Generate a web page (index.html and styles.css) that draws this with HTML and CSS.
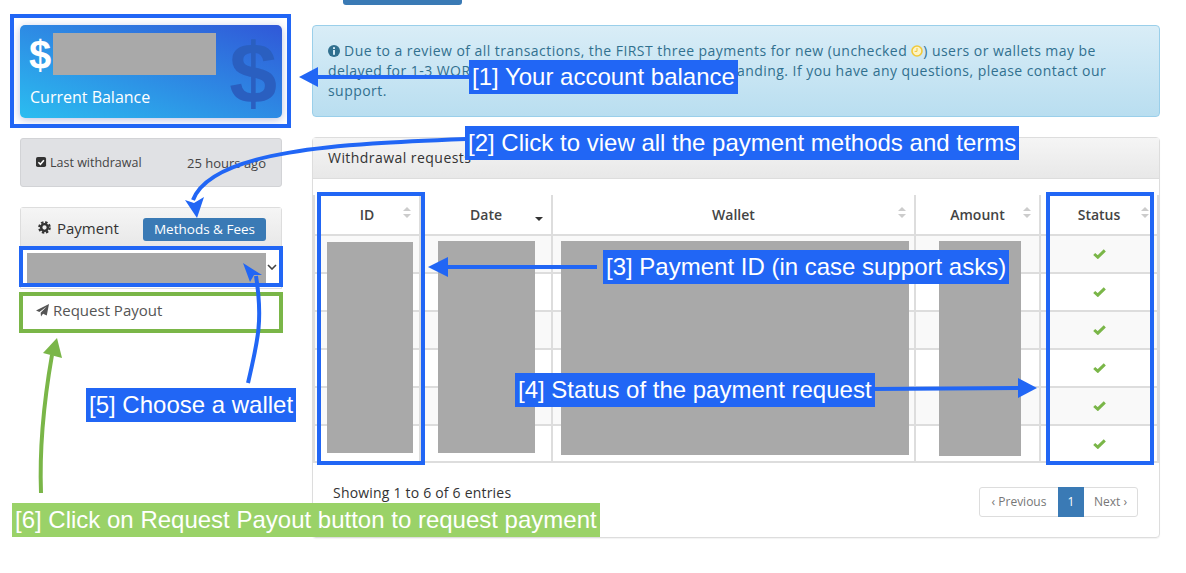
FILE: index.html
```html
<!DOCTYPE html>
<html lang="en">
<head>
<meta charset="UTF-8" />
<meta name="viewport" content="width=device-width, initial-scale=1.0"/>
<title>Withdrawals</title>
<link rel="stylesheet" href="styles.css">
</head>
<body>
<div class="page">

  <!-- Left column -->
  <aside class="sidebar">
    <div class="balance-card">
      <div class="balance-amount">$</div>
      <div class="balance-label">Current Balance</div>
      <div class="balance-bg">$</div>
    </div>

    <div class="last-box">
      <span class="last-title">
        <svg class="icon-check-square" viewBox="0 0 12 12"><rect width="11" height="11" rx="2" fill="#333"/><path d="M2.6 5.8 L4.8 8 L8.6 3.6" fill="none" stroke="#fff" stroke-width="1.7"/></svg>
        Last withdrawal
      </span>
      <span class="last-time">25 hours ago</span>
    </div>

    <div class="pay-panel">
      <div class="pay-head">
        <span class="pay-title">
          <svg class="icon-gear" viewBox="0 0 14 14"><circle cx="7" cy="7" r="3.6" fill="none" stroke="#333" stroke-width="2.6"/><circle cx="7" cy="7" r="5.6" fill="none" stroke="#333" stroke-width="2.4" stroke-dasharray="2.6 1.8"/></svg>
          Payment
        </span>
        <a class="btn-fees">Methods &amp; Fees</a>
      </div>
      <div class="pay-select">
        <svg class="icon-chevron" viewBox="0 0 10 6"><path d="M1 1 L5 5 L9 1" fill="none" stroke="#444" stroke-width="1.6"/></svg>
      </div>
    </div>

    <button class="btn-payout">
      <svg class="icon-plane" viewBox="0 0 14 14"><path d="M14 0 L11.6 12.4 L7.6 10.6 L5.4 13.4 L5 9.4 L11.6 2.8 L3.6 8.6 L0 7 Z" fill="#555"/></svg>
      Request Payout
    </button>
  </aside>

  <!-- Right column -->
  <main class="content">
    <div class="top-stub"></div>

    <div class="alert">
      <svg class="icon-info" viewBox="0 0 12 12"><circle cx="6" cy="6" r="6" fill="#31708f"/><rect x="5" y="2.2" width="2" height="1.8" fill="#d4e9f5"/><rect x="5" y="5" width="2" height="4.8" fill="#d4e9f5"/></svg>
      Due to a review of all transactions, the <span class="strong">FIRST three payments</span> for new (unchecked
      <svg class="icon-clock" viewBox="0 0 12 12"><circle cx="6" cy="6" r="5" fill="#fdf3c4" stroke="#f0c93a" stroke-width="1.6"/><path d="M6 3 V6.4 H3.6" fill="none" stroke="#f0c93a" stroke-width="1"/></svg>) users or wallets may be<br>
      delayed for <span class="strong">1-3 WORKING DAYS</span> while the reviews are outstanding. If you have any questions, please contact our<br>
      support.
    </div>

    <section class="panel">
      <div class="panel-head">Withdrawal requests</div>
      <table class="requests">
        <thead>
          <tr>
            <th class="col-id"><div class="th-in"><i></i><span>ID</span><b class="sort"></b></div></th>
            <th class="col-date"><div class="th-in"><i></i><span>Date</span><b class="sort-down"></b></div></th>
            <th class="col-wallet"><div class="th-in"><i></i><span>Wallet</span><b class="sort"></b></div></th>
            <th class="col-amount"><div class="th-in"><i></i><span>Amount</span><b class="sort"></b></div></th>
            <th class="col-status"><div class="th-in"><i></i><span>Status</span><b class="sort"></b></div></th>
          </tr>
        </thead>
        <tbody>
          <tr><td></td><td></td><td></td><td></td><td><svg class="icon-ok" viewBox="0 0 13 10"><path d="M1.2 5 L4.8 8.2 L11.8 1.4" fill="none" stroke="#7ab648" stroke-width="3"/></svg></td></tr>
          <tr><td></td><td></td><td></td><td></td><td><svg class="icon-ok" viewBox="0 0 13 10"><path d="M1.2 5 L4.8 8.2 L11.8 1.4" fill="none" stroke="#7ab648" stroke-width="3"/></svg></td></tr>
          <tr><td></td><td></td><td></td><td></td><td><svg class="icon-ok" viewBox="0 0 13 10"><path d="M1.2 5 L4.8 8.2 L11.8 1.4" fill="none" stroke="#7ab648" stroke-width="3"/></svg></td></tr>
          <tr><td></td><td></td><td></td><td></td><td><svg class="icon-ok" viewBox="0 0 13 10"><path d="M1.2 5 L4.8 8.2 L11.8 1.4" fill="none" stroke="#7ab648" stroke-width="3"/></svg></td></tr>
          <tr><td></td><td></td><td></td><td></td><td><svg class="icon-ok" viewBox="0 0 13 10"><path d="M1.2 5 L4.8 8.2 L11.8 1.4" fill="none" stroke="#7ab648" stroke-width="3"/></svg></td></tr>
          <tr><td></td><td></td><td></td><td></td><td><svg class="icon-ok" viewBox="0 0 13 10"><path d="M1.2 5 L4.8 8.2 L11.8 1.4" fill="none" stroke="#7ab648" stroke-width="3"/></svg></td></tr>
        </tbody>
      </table>
      <div class="table-foot">
        <span class="entries">Showing 1 to 6 of 6 entries</span>
        <div class="pager">
          <a class="pager-prev">&lsaquo; Previous</a>
          <a class="pager-num">1</a>
          <a class="pager-next">Next &rsaquo;</a>
        </div>
      </div>
    </section>
  </main>
</div>

<!-- Redacted blocks -->
<div class="redact r-balance"></div>
<div class="redact r-wallet"></div>
<div class="redact r-id"></div>
<div class="redact r-date"></div>
<div class="redact r-walletcol"></div>
<div class="redact r-amount"></div>

<!-- Annotation layer: boxes, arrows, labels -->
<div class="box box-balance"></div>
<div class="box box-select"></div>
<div class="box box-payout"></div>
<div class="box box-id"></div>
<div class="box box-status"></div>

<svg class="arrows" viewBox="0 0 1186 573">
  <g fill="none" stroke="#2166f5" stroke-width="4">
    <path d="M470 77 H314"/>
    <path d="M466 139 C340 144 212 150 193 200"/>
    <path d="M597 267 H444"/>
    <path d="M872 389 L1020 388"/>
    <path d="M248 383 C258 340 263 320 256 276"/>
  </g>
  <g fill="#2166f5">
    <path d="M299 77 L318 67 V87 Z"/>
    <path d="M197 218 L185 200 L194 203 L204 197 Z"/>
    <path d="M428 267 L448 257 V277 Z"/>
    <path d="M1037 388 L1018 378 V398 Z"/>
    <path d="M243 263 L262 275 L254 275 L250 282 Z"/>
  </g>
  <path d="M41 493 C39 440 45 395 52 355" fill="none" stroke="#7ab648" stroke-width="4"/>
  <path d="M57 338 L43 353 L62 358 Z" fill="#7ab648"/>
</svg>

<div class="note note-1">[1] Your account balance</div>
<div class="note note-2">[2] Click to view all the payment methods and terms</div>
<div class="note note-3">[3] Payment ID (in case support asks)</div>
<div class="note note-4">[4] Status of the payment request</div>
<div class="note note-5">[5] Choose a wallet</div>
<div class="note note-6">[6] Click on Request Payout button to request payment</div>
</body>
</html>
```

FILE: styles.css
```css
html, body {
  margin: 0;
  height: 573px;
  overflow: hidden;
}
body {
  position: relative;
  background: #fff;
  font-family: "Open Sans", "Liberation Sans", sans-serif;
  font-size: 13.5px;
  color: #333;
}
.page {
  display: flex;
  gap: 30px;
  padding-left: 20px;
}
svg {
  display: inline-block;
}

/* Sidebar */
.sidebar {
  width: 262px;
  flex: none;
  padding-top: 25px;
}
.balance-card {
  position: relative;
  height: 93px;
  border-radius: 5px;
  background: linear-gradient(to top right, #2bbdf0, #3058d8);
  box-shadow: 0 2px 10px rgba(40,60,160,0.3);
  color: #fff;
}
.balance-amount {
  padding: 5px 0 0 9px;
  height: 50px;
  font-family: "Liberation Sans", sans-serif;
  font-weight: bold;
  font-size: 40px;
  line-height: 50px;
}
.balance-label {
  padding: 6px 0 0 10px;
  font-size: 16px;
}
.balance-bg {
  position: absolute;
  right: 5px;
  top: 3px;
  font-family: "Liberation Sans", sans-serif;
  font-weight: bold;
  font-size: 86px;
  line-height: 90px;
  color: #2a5fc0;
}
.last-box {
  display: flex;
  justify-content: space-between;
  align-items: center;
  height: 47px;
  margin-top: 20px;
  padding: 0 15px;
  background: #e0e1e4;
  border: 1px solid #d2d3d6;
  border-radius: 3px;
  font-size: 12.5px;
  color: #444;
}
.last-title {
  display: flex;
  align-items: center;
  gap: 3px;
}
.last-time {
  font-size: 13px;
}
.icon-check-square {
  width: 11px;
  height: 11px;
}
.pay-panel {
  margin-top: 20px;
  height: 82px;
  border: 1px solid #ddd;
  border-radius: 3px 3px 0 0;
  box-sizing: border-box;
}
.pay-head {
  display: flex;
  justify-content: space-between;
  align-items: center;
  height: 39px;
  padding: 0 15px 0 17px;
  background: linear-gradient(#f5f5f5, #e8e8e8);
}
.pay-title {
  display: flex;
  align-items: center;
  gap: 6px;
  font-size: 15px;
}
.icon-gear {
  width: 13px;
  height: 13px;
}
.btn-fees {
  width: 123px;
  height: 23px;
  margin-top: 4px;
  background: #3a7ab5;
  border-radius: 3px;
  color: #fff;
  font-size: 13.5px;
  line-height: 23px;
  text-align: center;
}
.pay-select {
  display: flex;
  justify-content: flex-end;
  padding: 17px 4px 0 0;
}
.icon-chevron {
  width: 10px;
  height: 6px;
}
.btn-payout {
  display: flex;
  align-items: center;
  gap: 4px;
  width: 100%;
  height: 41px;
  margin-top: 3px;
  padding: 0 0 5px 16px;
  background: #fff;
  border: none;
  font-family: inherit;
  font-size: 15px;
  color: #555;
}
.icon-plane {
  width: 13px;
  height: 13px;
}

/* Main column */
.content {
  width: 848px;
  flex: none;
}
.top-stub {
  width: 119px;
  height: 5px;
  margin-left: 31px;
  background: #3a7ab5;
  border-radius: 0 0 3px 3px;
}
.alert {
  box-sizing: border-box;
  height: 92px;
  margin-top: 20px;
  padding: 15px 15px 0;
  background: linear-gradient(#d9edf7, #b9def0);
  border: 1px solid #9acfea;
  border-radius: 4px;
  color: #31708f;
  font-size: 14px;
  letter-spacing: 0.45px;
  line-height: 20px;
  white-space: nowrap;
}
.strong {
  font-weight: 500;
}
.icon-info {
  width: 12px;
  height: 12px;
  vertical-align: -1px;
}
.icon-clock {
  width: 12px;
  height: 12px;
  vertical-align: -1px;
}
.panel {
  box-sizing: border-box;
  height: 401px;
  margin-top: 20px;
  border: 1px solid #ddd;
  border-radius: 4px;
  box-shadow: 0 1px 1px rgba(0,0,0,0.05);
}
.panel-head {
  height: 40px;
  padding: 0 15px;
  background: linear-gradient(#f5f5f5, #e8e8e8);
  border-bottom: 1px solid #ddd;
  line-height: 40px;
  font-size: 14px;
  letter-spacing: 0.45px;
}
.requests {
  width: 846px;
  margin-top: 16px;
  border-collapse: collapse;
  table-layout: fixed;
}
.requests th,
.requests td {
  border: 2px solid #ddd;
  padding: 0;
}
.requests thead th {
  height: 39px;
  border-top: none;
  font-size: 14px;
  font-weight: 600;
  color: #444;
}
.col-id { width: 104px; }
.col-date { width: 130px; }
.col-wallet { width: 361px; }
.col-amount { width: 123px; }
.col-status { width: 116px; }
.th-in {
  display: grid;
  grid-template-columns: 1fr auto 1fr;
  align-items: center;
  padding: 0 8px;
}
.sort {
  justify-self: end;
  width: 0;
  height: 0;
  border: 4px solid transparent;
  border-top: 4px solid #ccc;
  position: relative;
  top: 3px;
}
.sort::before {
  content: "";
  position: absolute;
  left: -4px;
  top: -11px;
  border: 4px solid transparent;
  border-bottom: 4px solid #ccc;
  border-top: none;
}
.sort-down {
  justify-self: end;
  width: 0;
  height: 0;
  border: 4px solid transparent;
  border-top: 4px solid #333;
  border-bottom: none;
  position: relative;
  top: 4px;
}
.requests td {
  height: 36px;
  text-align: center;
  vertical-align: middle;
}
.requests tbody tr:nth-child(odd) {
  background: #f9f9f9;
}
.requests tbody tr:last-child td {
  height: 35px;
}
.icon-ok {
  display: block;
  width: 13px;
  height: 10px;
  margin: 0 auto;
}
.table-foot {
  display: flex;
  justify-content: space-between;
  align-items: flex-start;
  padding: 24px 21px 0 20px;
}
.entries {
  margin-top: -1px;
  font-size: 14px;
  letter-spacing: 0.2px;
  line-height: 14px;
}
.pager {
  display: flex;
  height: 30px;
  border: 1px solid #ddd;
  border-radius: 3px;
  box-sizing: border-box;
  font-size: 12px;
  line-height: 28px;
  color: #777;
}
.pager-prev { width: 78px; text-align: center; }
.pager-num { width: 26px; text-align: center; background: #3a7ab5; color: #fff; margin: -1px 0; line-height: 30px; }
.pager-next { width: 53px; text-align: center; }

/* Redacted blocks */
.redact {
  position: absolute;
  background: #a9a9a9;
}
.r-balance { left: 53px; top: 33px; width: 163px; height: 42px; }
.r-wallet { left: 27px; top: 253px; width: 239px; height: 30px; }
.r-id { left: 327px; top: 242px; width: 86px; height: 211px; }
.r-date { left: 438px; top: 241px; width: 97px; height: 212px; }
.r-walletcol { left: 561px; top: 241px; width: 348px; height: 214px; }
.r-amount { left: 939px; top: 241px; width: 82px; height: 215px; }

/* Annotations */
.box {
  position: absolute;
  box-sizing: border-box;
  border: 4px solid #2166f5;
}
.box-balance { left: 10px; top: 14px; width: 281px; height: 114px; }
.box-select { left: 19px; top: 246px; width: 264px; height: 41px; }
.box-payout { left: 19px; top: 292px; width: 264px; height: 41px; border-color: #7ab648; }
.box-id { left: 317px; top: 192px; width: 108px; height: 273px; }
.box-status { left: 1046px; top: 192px; width: 108px; height: 273px; }
.arrows {
  position: absolute;
  left: 0;
  top: 0;
  width: 1186px;
  height: 573px;
}
.note {
  position: absolute;
  height: 34px;
  padding: 0 3px;
  background: #2166f5;
  color: #fff;
  font-family: "Liberation Sans", sans-serif;
  font-size: 24px;
  line-height: 34px;
  white-space: nowrap;
}
.note-1 { left: 469px; top: 60px; }
.note-2 { left: 465px; top: 126px; }
.note-3 { left: 603px; top: 250px; }
.note-4 { left: 515px; top: 373px; }
.note-5 { left: 86px; top: 388px; }
.note-6 { left: 12px; top: 503px; background: #9ad268; }
```
